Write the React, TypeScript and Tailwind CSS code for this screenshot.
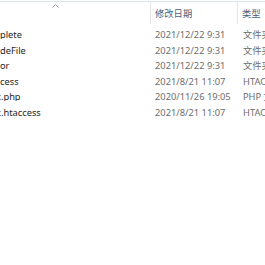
const rows = [
  { name: "plete", date: "2021/12/22 9:31", type: "文件夹" },
  { name: "deFile", date: "2021/12/22 9:31", type: "文件夹" },
  { name: "or", date: "2021/12/22 9:31", type: "文件夹" },
  { name: "cess", date: "2021/8/21 11:07", type: "HTACCESS 文件" },
  { name: "x.php", date: "2020/11/26 19:05", type: "PHP 文件", cut: true },
  { name: "x.htaccess", date: "2021/8/21 11:07", type: "HTACCESS 文件", cut: true },
];

const App = () => {
  return (
    <div
      className="w-[265px] h-[265px] overflow-hidden bg-white text-[9.3px] leading-none"
      style={{ fontFamily: '"Noto Sans", "Noto Sans CJK SC", sans-serif' }}
    >
      {/* header */}
      <div className="h-[26px] border-t border-[#dde3ea] mt-[1px] grid grid-cols-[151px_87px_1fr]">
        <div className="relative h-[22px] border-r border-[#e5e5e5]">
          <svg className="absolute left-[52px] top-[2px]" width="7" height="4" viewBox="0 0 7 4">
            <path d="M0.5 3.5 L3.5 0.5 L6.5 3.5" fill="none" stroke="#a0a8b4" strokeWidth="1" />
          </svg>
        </div>
        <div className="h-[22px] border-r border-[#e5e5e5] pl-[4px] pt-[7px] text-[#4c607a] whitespace-nowrap">修改日期</div>
        <div className="h-[22px] pl-[4px] pt-[7px] text-[#4c607a] whitespace-nowrap">类型</div>
      </div>

      {/* rows */}
      <div className="flex flex-col">
        {rows.map((r) => (
          <div key={r.name} className="h-[15.5px] grid grid-cols-[151px_87px_1fr] items-center whitespace-nowrap">
            <div className="overflow-hidden text-[#1e1e1e]">
              <span className={r.cut ? "block -ml-[4px]" : "block"}>{r.name}</span>
            </div>
            <div className="pl-[4px] text-[#6d6d6d]">{r.date}</div>
            <div className="pl-[5px] text-[#6d6d6d] overflow-hidden">{r.type}</div>
          </div>
        ))}
      </div>
    </div>
  );
};

export default App;
